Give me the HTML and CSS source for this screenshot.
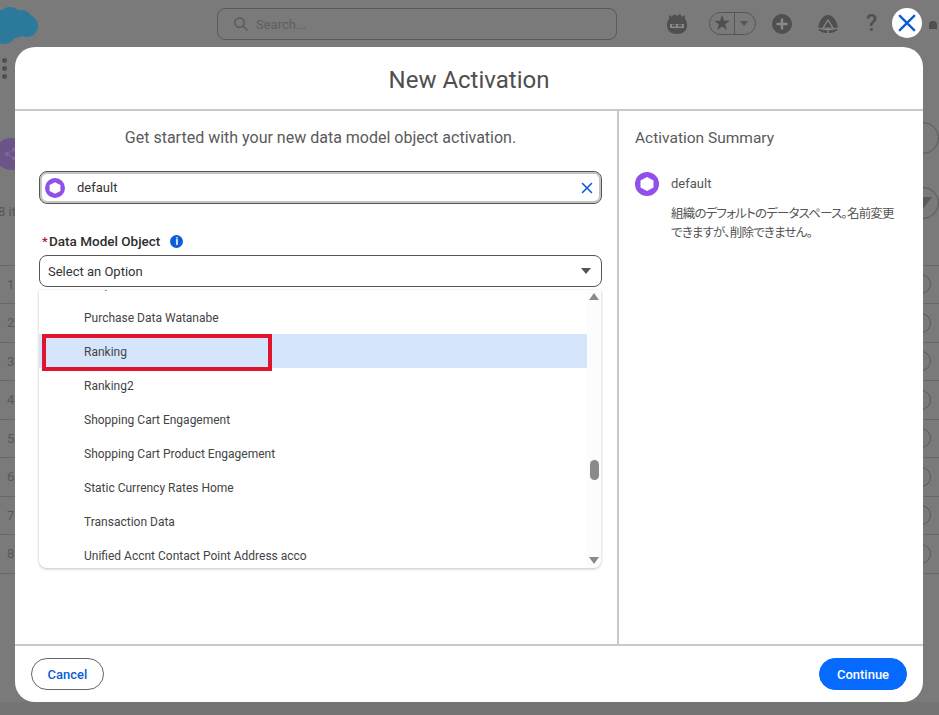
FILE: index.html
```html
<!doctype html>
<html lang="en">
<head>
  <meta charset="utf-8">
  <title>New Activation</title>
  <link rel="stylesheet" href="styles.css">
</head>
<body>
<!-- page behind the dimmed backdrop -->
<div class="app">
  <header class="topbar">
    <svg class="logo" viewBox="0 0 60 40" aria-hidden="true">
      <g fill="#2b7a9c">
        <circle cx="13" cy="20" r="15"/>
        <circle cx="24" cy="14" r="12"/>
        <circle cx="35" cy="17" r="12"/>
        <circle cx="41" cy="21" r="11"/>
        <circle cx="18" cy="27" r="12"/>
        <circle cx="30" cy="24" r="9"/>
      </g>
    </svg>
    <div class="search">
      <svg class="search-icon" viewBox="0 0 16 16" aria-hidden="true">
        <circle cx="7" cy="7" r="5" fill="none" stroke="#5a5a5a" stroke-width="1.6"/>
        <path d="M11 11l4 4" stroke="#5a5a5a" stroke-width="1.6" stroke-linecap="round"/>
      </svg>
      <span>Search...</span>
    </div>
    <div class="actions">
      <svg class="act-avatar" viewBox="0 0 24 24" aria-hidden="true">
        <path d="M2 13c0-3 1-5 2-6L4 3l3 2 2-3 3 2 3-2 2 3 3-2 0 4c1 1 2 3 2 6 0 6-4 9-10 9S2 19 2 13z" fill="#4f4f4f"/>
        <path d="M5 12h14v4H5z" fill="#8a8a8a"/>
        <path d="M7 12.500h4v2H7zM13 12.500h4v2h-4z" fill="#4f4f4f"/>
      </svg>
      <div class="fav">
        <span class="fav-star">★</span>
        <span class="fav-caret"></span>
      </div>
      <svg class="act-plus" viewBox="0 0 20 20" aria-hidden="true">
        <circle cx="10" cy="10" r="10" fill="#4f4f4f"/>
        <path d="M10 4.500v11M4.500 10h11" stroke="#8a8a8a" stroke-width="2.400"/>
      </svg>
      <svg class="act-trail" viewBox="0 0 22 20" aria-hidden="true">
        <path d="M11 1c5 0 9 6 10 13 0 3-5 5-10 5S1 17 1 14C2 7 6 1 11 1z" fill="#4f4f4f"/>
        <path d="M11 6l-5 8h10zM1 14c6 2 14 2 20 0M11 14v5" fill="none" stroke="#8a8a8a" stroke-width="1.200"/>
      </svg>
      <span class="act-help">?</span>
      <span class="act-bell"></span>
    </div>
  </header>

  <div class="subnav">
    <span class="dots"><i></i><i></i><i></i></span>
  </div>

  <div class="list-head">
    <div class="list-title">
      <span class="list-icon">
        <svg viewBox="0 0 16 16" aria-hidden="true">
          <circle cx="4" cy="8" r="2" fill="#7d6a99"/>
          <circle cx="11" cy="3.500" r="2" fill="#7d6a99"/>
          <circle cx="11" cy="12.500" r="2" fill="#7d6a99"/>
          <path d="M4 8l7-4.500M4 8l7 4.500" stroke="#7d6a99" stroke-width="1"/>
        </svg>
      </span>
      <span class="list-count">8 items</span>
    </div>
    <div class="list-tools">
      <span class="tool"></span>
      <span class="tool"><i class="tool-caret"></i></span>
    </div>
  </div>

  <div class="rows">
    <div class="row"><span>1</span><i class="row-menu"></i></div>
    <div class="row"><span>2</span><i class="row-menu"></i></div>
    <div class="row"><span>3</span><i class="row-menu"></i></div>
    <div class="row"><span>4</span><i class="row-menu"></i></div>
    <div class="row"><span>5</span><i class="row-menu"></i></div>
    <div class="row"><span>6</span><i class="row-menu"></i></div>
    <div class="row"><span>7</span><i class="row-menu"></i></div>
    <div class="row"><span>8</span><i class="row-menu"></i></div>
  </div>
</div>

<button class="modal-close" aria-label="Close">
  <svg viewBox="0 0 20 20" aria-hidden="true">
    <path d="M2 2l16 16M18 2L2 18" stroke="#0b5cd5" stroke-width="2.600" stroke-linecap="round"/>
  </svg>
</button>

<section class="modal">
  <h1 class="modal-title">New Activation</h1>
  <div class="modal-body">
    <div class="main">
      <p class="intro">Get started with your new data model object activation.</p>

      <div class="picked">
        <svg class="space-icon small" viewBox="0 0 24 24" aria-hidden="true">
          <circle cx="12" cy="12" r="12" fill="#9050e9"/>
          <path d="M12 5l6.500 3.500v7L12 19l-6.500-3.500v-7z" fill="#fff"/>
        </svg>
        <span class="picked-name">default</span>
        <svg class="picked-clear" viewBox="0 0 12 12" aria-hidden="true">
          <path d="M1.500 1.500l9 9M10.500 1.500l-9 9" stroke="#0b5cd5" stroke-width="1.600" stroke-linecap="round"/>
        </svg>
      </div>

      <div class="field-label">
        <span class="req">*</span>
        <span>Data Model Object</span>
        <span class="info">i</span>
      </div>
      <div class="combo">
        <span>Select an Option</span>
        <i class="combo-caret"></i>
      </div>

      <div class="dropdown">
        <ul class="options">
          <li>Shop Data</li>
          <li>Purchase Data Watanabe</li>
          <li class="active">Ranking<span class="marker"></span></li>
          <li>Ranking2</li>
          <li>Shopping Cart Engagement</li>
          <li>Shopping Cart Product Engagement</li>
          <li>Static Currency Rates Home</li>
          <li>Transaction Data</li>
          <li>Unified Accnt Contact Point Address acco</li>
        </ul>
        <div class="scrollbar">
          <i class="arrow-up"></i>
          <i class="thumb"></i>
          <i class="arrow-down"></i>
        </div>
      </div>
    </div>

    <aside class="summary">
      <h2 class="summary-title">Activation Summary</h2>
      <div class="summary-item">
        <svg class="space-icon" viewBox="0 0 24 24" aria-hidden="true">
          <circle cx="12" cy="12" r="12" fill="#9050e9"/>
          <path d="M12 5l6.500 3.500v7L12 19l-6.500-3.500v-7z" fill="#fff"/>
        </svg>
        <div>
          <div class="summary-name">default</div>
          <p class="summary-text" lang="ja">組織のデフォルトのデータスペース。名前変更できますが、削除できません。</p>
        </div>
      </div>
    </aside>
  </div>
  <footer class="modal-foot">
    <button class="btn">Cancel</button>
    <button class="btn btn-brand">Continue</button>
  </footer>
</section>
</body>
</html>
```

FILE: styles.css
```css
* {
    margin: 0;
    padding: 0;
    box-sizing: border-box;
}
html, body {
    height: 100%;
}
body {
    position: relative;
    width: 939px;
    height: 715px;
    overflow: hidden;
    background-color: #747474;
    font-family: Roboto, "Noto Sans CJK JP", sans-serif;
    color: #444;
}
button {
    font-family: inherit;
}

/* background page, seen through the backdrop */
.app {
    height: 702px;
    overflow: hidden;
    background-color: #7a7a7a;
}
.topbar {
    display: flex;
    align-items: center;
    height: 47px;
}
.logo {
    width: 60px;
    height: 40px;
    margin-left: -14px;
    margin-top: 2px;
}
.search {
    display: flex;
    align-items: center;
    gap: 8px;
    width: 400px;
    height: 32px;
    margin-left: 171px;
    padding-left: 15px;
    border: 1px solid #5a5a5a;
    border-radius: 8px;
    font-size: 13px;
    color: #5e5e5e;
}
.search span {
    padding-top: 1px;
}
.search-icon {
    width: 15px;
    height: 15px;
}
.actions {
    display: flex;
    align-items: center;
    margin-left: 48px;
}
.act-avatar {
    width: 24px;
    height: 24px;
}
.fav {
    display: flex;
    align-items: center;
    width: 47px;
    height: 23px;
    margin-left: 20px;
    border: 1px solid #555;
    border-radius: 12px;
}
.fav-star {
    width: 25px;
    border-right: 1px solid #555;
    font-size: 17px;
    line-height: 21px;
    text-align: center;
    color: #4f4f4f;
}
.fav-caret {
    margin-left: 5px;
    border-top: 5px solid #555;
    border-left: 4px solid transparent;
    border-right: 4px solid transparent;
}
.act-plus {
    width: 20px;
    height: 20px;
    margin-left: 16px;
}
.act-trail {
    width: 22px;
    height: 20px;
    margin-left: 25px;
}
.act-help {
    margin-left: 27px;
    font-size: 23px;
    font-weight: 500;
    line-height: 24px;
    color: #4f4f4f;
}
.act-bell {
    width: 8px;
    height: 8px;
    margin-left: 52px;
    margin-top: 2px;
    background-color: #4f4f4f;
    border-radius: 4px 4px 0 0;
}
.subnav {
    height: 53px;
    padding-top: 11px;
    padding-left: 2px;
}
.dots {
    display: flex;
    flex-direction: column;
    gap: 3px;
    width: 5px;
}
.dots i {
    width: 5px;
    height: 5px;
    border-radius: 50%;
    background-color: #4f4f4f;
}
.list-head {
    display: flex;
    justify-content: space-between;
    height: 164.500px;
}
.list-title {
    display: flex;
    flex-direction: column;
    align-items: flex-start;
    gap: 34px;
    padding-top: 38px;
}
.list-icon {
    display: flex;
    align-items: center;
    justify-content: center;
    width: 32px;
    height: 32px;
    margin-left: -5px;
    border-radius: 50%;
    background-color: #6a5488;
}
.list-icon svg {
    width: 16px;
    height: 16px;
}
.list-count {
    margin-left: -2px;
    font-size: 13px;
    color: #565656;
}
.list-tools {
    display: flex;
    flex-direction: column;
    gap: 33px;
    padding-top: 22px;
}
.tool {
    display: flex;
    align-items: center;
    justify-content: center;
    width: 32px;
    height: 32px;
    border: 1px solid #5a5a5a;
    border-radius: 50%;
}
.tool-caret {
    border-top: 12px solid #5a5a5a;
    border-left: 9px solid transparent;
    border-right: 9px solid transparent;
}
.row {
    display: flex;
    align-items: center;
    justify-content: space-between;
    height: 38.500px;
    padding: 0 8px 0 7px;
    border-top: 1px solid #686868;
    font-size: 13px;
    color: #585858;
}
.row:last-child {
    border-bottom: 1px solid #686868;
    height: 39.500px;
}
.row-menu {
    width: 20px;
    height: 20px;
    border: 1px solid #5a5a5a;
    border-radius: 50%;
}

/* modal */
.modal {
    position: absolute;
    left: 15px;
    top: 47px;
    display: flex;
    flex-direction: column;
    width: 908px;
    height: 655px;
    background-color: #fff;
    border-radius: 20px;
}
.modal-close {
    position: absolute;
    left: 892px;
    top: 8px;
    z-index: 2;
    display: flex;
    align-items: center;
    justify-content: center;
    width: 30px;
    height: 30px;
    background-color: #fff;
    border: 0;
    border-radius: 50%;
}
.modal-close svg {
    width: 18px;
    height: 18px;
}
.modal-title {
    height: 64px;
    border-bottom: 2px solid #c9c9c9;
    font-size: 24px;
    font-weight: 400;
    line-height: 66px;
    text-align: center;
    color: #4f4f4f;
}
.modal-body {
    display: flex;
    flex: 1;
    min-height: 0;
}
.main {
    width: 604px;
    padding: 16px 15px 0 24px;
    border-right: 2px solid #c9c9c9;
}
.intro {
    font-size: 16px;
    line-height: 22px;
    text-align: center;
    color: #5a5a5a;
}
.picked {
    display: flex;
    align-items: center;
    height: 33px;
    margin-top: 22px;
    padding: 0 8px 0 5px;
    border: 1px solid #555;
    border-radius: 8px;
    box-shadow: inset 0 0 0 2px #c4c4c4;
}
.space-icon {
    flex: none;
    width: 24px;
    height: 24px;
}
.space-icon.small {
    width: 20px;
    height: 20px;
}
.picked-name {
    flex: 1;
    margin-left: 12px;
    font-size: 13px;
    color: #333;
}
.picked-clear {
    width: 12px;
    height: 12px;
}
.field-label {
    display: flex;
    align-items: center;
    height: 18px;
    margin-top: 28px;
    font-size: 13.500px;
    font-weight: 500;
    color: #2e2e2e;
}
.req {
    width: 6px;
    margin-left: 3px;
    margin-right: 1px;
    font-weight: 400;
    color: #ba0517;
}
.info {
    width: 13px;
    height: 13px;
    margin-left: 10px;
    border-radius: 50%;
    background-color: #0b5cd5;
    font-size: 10px;
    font-weight: 700;
    line-height: 13px;
    text-align: center;
    color: #fff;
}
.combo {
    display: flex;
    align-items: center;
    justify-content: space-between;
    height: 32px;
    margin-top: 5px;
    padding: 0 10px 0 8px;
    border: 1px solid #555;
    border-radius: 8px;
    font-size: 13px;
    color: #333;
}
.combo-caret {
    border-top: 6px solid #555;
    border-left: 5px solid transparent;
    border-right: 5px solid transparent;
}
.dropdown {
    display: flex;
    height: 278px;
    margin-top: 3px;
    margin-right: 1px;
    overflow: hidden;
    background-color: #fff;
    border-radius: 0 0 8px 8px;
    box-shadow: 0 1px 3px rgba(0, 0, 0, 0.25);
}
.options {
    flex: 1;
    margin-top: -24px;
    list-style: none;
}
.options li {
    position: relative;
    height: 34px;
    padding-left: 45px;
    font-size: 12px;
    line-height: 37px;
    color: #444;
}
.options .active {
    background-color: #d5e5fc;
}
/* red frame drawn on the screenshot */
.marker {
    position: absolute;
    left: 3px;
    top: 0;
    width: 230px;
    height: 37px;
    border: 4px solid #e0142c;
}
.scrollbar {
    display: flex;
    flex-direction: column;
    align-items: center;
    position: relative;
    width: 14px;
    background-color: #fcfcfc;
}
.arrow-up,
.arrow-down {
    position: absolute;
    border-left: 5px solid transparent;
    border-right: 5px solid transparent;
}
.arrow-up {
    top: 3px;
    border-bottom: 7px solid #8a8a8a;
}
.arrow-down {
    bottom: 4px;
    border-top: 7px solid #8a8a8a;
}
.thumb {
    position: absolute;
    top: 170px;
    width: 9px;
    height: 20px;
    border-radius: 5px;
    background-color: #8a8a8a;
}
.summary {
    flex: 1;
    padding: 16px 24px 0 16px;
}
.summary-title {
    font-size: 15.500px;
    font-weight: 400;
    line-height: 22px;
    color: #5a5a5a;
}
.summary-item {
    display: flex;
    gap: 12px;
    margin-top: 23px;
}
.summary-name {
    font-size: 13px;
    line-height: 24px;
    color: #555;
}
.summary-text {
    margin-top: 8px;
    font-size: 12.500px;
    line-height: 19px;
    letter-spacing: -0.8px;
    font-feature-settings: "palt";
    color: #555;
}
.modal-foot {
    display: flex;
    align-items: center;
    justify-content: space-between;
    height: 58px;
    padding: 0 16px;
    border-top: 2px solid #c9c9c9;
    flex: none;
}
.btn {
    width: 73px;
    height: 32px;
    background-color: #fff;
    border: 1px solid #666;
    border-radius: 16px;
    font-size: 13px;
    font-weight: 500;
    color: #0b5cd5;
}
.btn-brand {
    width: 88px;
    background-color: #066afe;
    border-color: #066afe;
    color: #fff;
}
```
